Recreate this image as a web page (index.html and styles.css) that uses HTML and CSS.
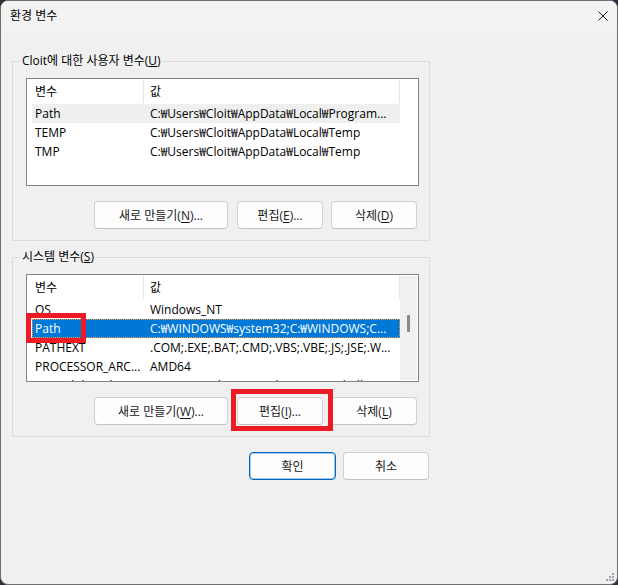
FILE: index.html
```html
<!DOCTYPE html>
<html lang="ko">
<head>
    <meta charset="UTF-8">
    <title>환경 변수</title>
    <link rel="stylesheet" href="styles.css">
</head>
<body>

    <div class="window">
        <!-- Barra de titulo -->
        <div class="titlebar">
            <span class="title">환경 변수</span>
            <svg class="close" width="10" height="10" viewBox="0 0 10 10">
                <path d="M0.5 0.5 L9.5 9.5 M9.5 0.5 L0.5 9.5" stroke="#1a1a1a" stroke-width="1"/>
            </svg>
        </div>

        <div class="content">
            <!-- Variables de usuario -->
            <fieldset class="group">
                <legend>Cloit에 대한 사용자 변수(<u>U</u>)</legend>
                <div class="list">
                    <div class="list-body">
                        <div class="row head"><span>변수</span><span>값</span></div>
                        <div class="row hover"><span>Path</span><span>C:₩Users₩Cloit₩AppData₩Local₩Program...</span></div>
                        <div class="row"><span>TEMP</span><span>C:₩Users₩Cloit₩AppData₩Local₩Temp</span></div>
                        <div class="row"><span>TMP</span><span>C:₩Users₩Cloit₩AppData₩Local₩Temp</span></div>
                    </div>
                </div>
                <div class="buttons">
                    <button class="wide">새로 만들기(<u>N</u>)...</button>
                    <button>편집(<u>E</u>)...</button>
                    <button>삭제(<u>D</u>)</button>
                </div>
            </fieldset>

            <!-- Variables de sistema -->
            <fieldset class="group system">
                <legend>시스템 변수(<u>S</u>)</legend>
                <div class="list">
                    <div class="list-body">
                        <div class="row head"><span>변수</span><span>값</span></div>
                        <div class="row"><span>OS</span><span>Windows_NT</span></div>
                        <div class="row selected"><span>Path</span><span>C:₩WINDOWS₩system32;C:₩WINDOWS;C...</span></div>
                        <div class="row"><span>PATHEXT</span><span>.COM;.EXE;.BAT;.CMD;.VBS;.VBE;.JS;.JSE;.W...</span></div>
                        <div class="row"><span>PROCESSOR_ARC...</span><span>AMD64</span></div>
                        <div class="row"><span>PSModulePath</span><span>%ProgramFiles%₩WindowsPowerShell₩Modules...</span></div>
                    </div>
                    <div class="scrollbar"><span class="thumb"></span></div>
                </div>
                <div class="buttons">
                    <button class="wide">새로 만들기(<u>W</u>)...</button>
                    <button>편집(<u>I</u>)...</button>
                    <button>삭제(<u>L</u>)</button>
                </div>
            </fieldset>

            <div class="dialog-buttons">
                <button class="default">확인</button>
                <button>취소</button>
            </div>
        </div>

        <!-- Marcas rojas -->
        <span class="mark mark-path"></span>
        <span class="mark mark-edit"></span>

        <svg class="grip" width="9" height="9" viewBox="0 0 9 9">
            <rect x="6" y="0" width="2" height="2" fill="#a3a3a3"/>
            <rect x="3" y="3" width="2" height="2" fill="#a3a3a3"/>
            <rect x="6" y="3" width="2" height="2" fill="#a3a3a3"/>
            <rect x="0" y="6" width="2" height="2" fill="#a3a3a3"/>
            <rect x="3" y="6" width="2" height="2" fill="#a3a3a3"/>
            <rect x="6" y="6" width="2" height="2" fill="#a3a3a3"/>
        </svg>
    </div>

</body>
</html>
```

FILE: styles.css
```css
html {
    background-color: #2e3039;
}
body {
    margin: 0;
    padding: 0;
    font-family: "Open Sans", "Noto Sans CJK KR", sans-serif;
    font-size: 12px;
    color: #000;
}
.window {
    position: relative;
    box-sizing: border-box;
    width: 618px;
    height: 585px;
    background-color: #f0f0f0;
    border: 1px solid #6e6e6e;
    border-radius: 8px;
    overflow: hidden;
}
.titlebar {
    height: 30px;
    background-color: #f3f3f3;
    display: flex;
    align-items: center;
    justify-content: space-between;
    padding: 0 9px 0 9px;
}
.title {
    line-height: 30px;
}
.close {
    display: block;
}
.content {
    padding: 22px 0 0 11px;
}
.group {
    box-sizing: border-box;
    width: 418px;
    margin: 0;
    padding: 9px 10px 11px 13px;
    border: 1px solid #dcdcdc;
}
.group.system {
    margin-top: 8px;
}
.group legend {
    padding: 0 2px;
    margin-left: -6px;
    line-height: 16px;
}
.list {
    box-sizing: border-box;
    height: 108px;
    border: 1px solid #828282;
    background-color: #fff;
    display: flex;
    overflow: hidden;
}
.list-body {
    flex: 0 0 373px;
    box-sizing: border-box;
    padding-left: 5px;
}
.row {
    display: grid;
    grid-template-columns: 112px 256px;
    height: 19px;
    line-height: 19px;
}
.row span {
    box-sizing: border-box;
    white-space: nowrap;
    overflow: hidden;
    text-overflow: ellipsis;
    padding-left: 3px;
    padding-right: 1px;
}
.row span + span {
    padding-left: 6px;
    padding-right: 4px;
}
.row.head {
    height: 25px;
}
.row.head span {
    height: 23px;
    line-height: 23px;
    margin: 1px 0;
    border-right: 1px solid #e5e5e5;
}
.row.hover {
    background-color: #efefef;
}
.row.selected {
    background-color: #0078d7;
    color: #fff;
    outline: 1px dotted #f59a3c;
    outline-offset: -1px;
}
.scrollbar {
    flex: 0 0 17px;
    margin: 1px 0;
    background-color: #f0f0f0;
}
.thumb {
    display: block;
    width: 3px;
    height: 17px;
    margin: 39px 0 0 7px;
    background-color: #8a8a8a;
    border-radius: 1px;
}
.buttons {
    display: flex;
    justify-content: flex-end;
    gap: 8px;
    margin-top: 15px;
    padding-right: 2px;
}
button {
    box-sizing: border-box;
    width: 86px;
    height: 28px;
    padding: 0;
    font-family: inherit;
    font-size: 12px;
    color: #1a1a1a;
    background-color: #fdfdfd;
    border: 1px solid #d0d0d0;
    border-bottom-color: #c2c2c2;
    border-radius: 4px;
}
button u {
    text-underline-offset: 2px;
}
button.wide {
    width: 134px;
    margin-right: 1px;
}
.dialog-buttons {
    width: 418px;
    display: flex;
    justify-content: flex-end;
    gap: 7px;
    margin-top: 15px;
    padding-right: 1px;
    box-sizing: border-box;
}
.dialog-buttons button:first-child {
    width: 87px;
}
button.default {
    border-color: #0067c0;
    box-shadow: inset 0 0 0 1px rgba(0, 103, 192, 0.35);
}
.mark {
    position: absolute;
    box-sizing: border-box;
    border: 5px solid #ed1c24;
}
.mark-path {
    left: 25px;
    top: 312px;
    width: 60px;
    height: 30px;
}
.mark-edit {
    left: 230px;
    top: 388px;
    width: 102px;
    height: 42px;
}
.grip {
    position: absolute;
    right: 2px;
    bottom: 2px;
}
```
